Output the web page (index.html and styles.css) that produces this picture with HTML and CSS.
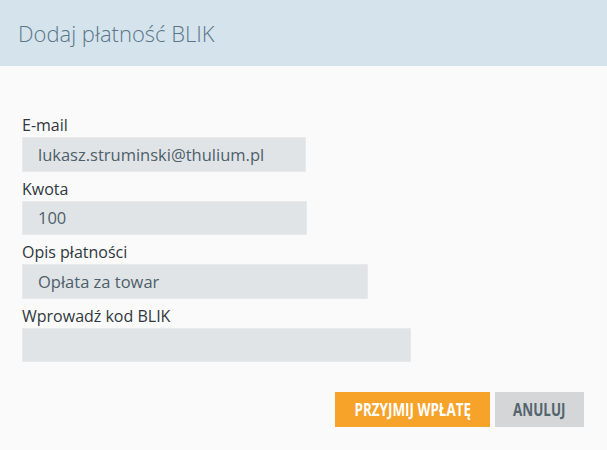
FILE: index.html
```html
<!DOCTYPE html>
<html lang="pl">
<head>
<meta charset="utf-8">
<title>Dodaj płatność BLIK</title>
<link rel="stylesheet" href="styles.css">
</head>
<body>
<div class="dialog">
  <header class="dialog-header">
    <h1 class="dialog-title">Dodaj płatność BLIK</h1>
  </header>
  <form class="dialog-body">
    <label class="field-label">E-mail</label>
    <div class="field w-email">lukasz.struminski@thulium.pl</div>
    <label class="field-label">Kwota</label>
    <div class="field w-amount">100</div>
    <label class="field-label">Opis płatności</label>
    <div class="field w-desc">Opłata za towar</div>
    <label class="field-label">Wprowadź kod BLIK</label>
    <div class="field w-code"></div>
    <div class="actions">
      <button type="button" class="btn btn-primary"><span class="btn-text">Przyjmij wpłatę</span></button>
      <button type="button" class="btn btn-secondary"><span class="btn-text">Anuluj</span></button>
    </div>
  </form>
</div>
</body>
</html>
```

FILE: styles.css
```css
* { box-sizing: border-box; }
html, body {
  margin: 0;
  padding: 0;
  background: #fafafa;
  font-family: "Open Sans", "Noto Sans", sans-serif;
}
.dialog {
  width: 607px;
  height: 450px;
  background: #fafafa;
}
.dialog-header {
  height: 66px;
  background: #d5e3ec;
  display: flex;
  align-items: center;
  padding-left: 18px;
}
.dialog-title {
  margin: 0;
  font-size: 22px;
  font-weight: 300;
  color: #5a7688;
}
.dialog-body {
  display: flex;
  flex-direction: column;
  align-items: flex-start;
  padding: 49px 23px 0 22px;
}
.field-label {
  font-size: 16px;
  line-height: 20px;
  color: #30383d;
  margin-bottom: 2px;
}
.field {
  height: 34.5px;
  background: #e1e4e6;
  border: 1px solid #e7e9eb;
  margin-bottom: 7px;
  padding-left: 15px;
  display: flex;
  align-items: center;
  font-size: 16.5px;
  color: #4d5f6b;
}
.w-email { width: 284px; }
.w-amount { width: 285px; }
.w-desc { width: 346px; }
.w-code { width: 389px; }
.actions {
  align-self: stretch;
  display: flex;
  justify-content: flex-end;
  gap: 5px;
  margin-top: 23px;
}
.btn {
  height: 35px;
  border: none;
  font-family: "Open Sans", "Noto Sans", sans-serif;
  font-weight: 700;
  font-size: 17px;
  text-transform: uppercase;
  padding: 0;
  cursor: pointer;
  display: flex;
  align-items: center;
  justify-content: center;
}
.btn-text {
  display: inline-block;
  transform: scaleX(0.79);
  white-space: nowrap;
}
.btn-primary {
  width: 155px;
  background: #f7a229;
  color: #ffffff;
}
.btn-secondary {
  width: 89px;
  background: #d4d6d8;
  color: #56646e;
}
```
